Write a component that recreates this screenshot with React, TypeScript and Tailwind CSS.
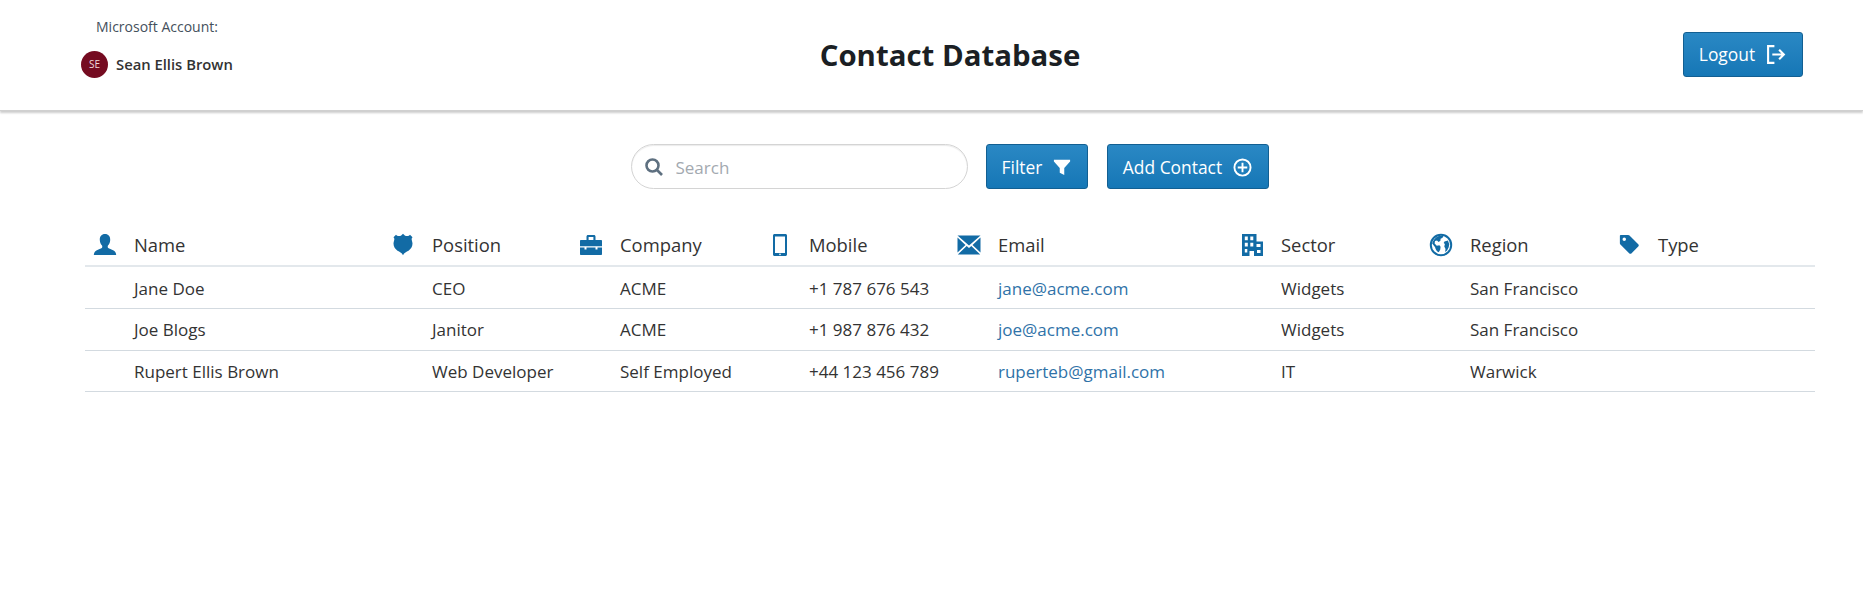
const FONT = "font-['Open_Sans',sans-serif]";

const BLUE = '#126ba5';

const IconUser = () => (
  <svg viewBox="0 0 24 24" className="w-6 h-6" fill={BLUE}>
    <path d="M12 1c3.400 0 5.400 2.500 5.200 6-.1 2.400-1 4.300-2.200 5.400-.4.4-.4 2 .2 2.600.8.800 3.400 1.400 5.400 2.400 1.600.8 2.400 2 2.600 4.600H.8c.2-2.600 1-3.800 2.600-4.600 2-1 4.600-1.600 5.400-2.400.6-.6.6-2.200.2-2.600C7.800 11.300 6.900 9.400 6.800 7 6.600 3.500 8.600 1 12 1z" />
  </svg>
);
const IconShield = () => (
  <svg viewBox="0 0 24 24" className="w-6 h-6" fill={BLUE}>
    <path d="M12 .8l1.800 1.600c1.400.9 3 .9 4.400 0l.8-.7 2.500 2.500-.8 1.200c-.4 1.200.8 3 .8 5.200 0 3-1.700 5.600-4 7.200-2 1.300-4.300 1.800-5.500 4.400-1.200-2.600-3.500-3.100-5.500-4.400-2.300-1.600-4-4.200-4-7.200 0-2.200 1.200-4 .8-5.200l-.8-1.200L5 1.700l.8.7c1.400.9 3 .9 4.400 0z" />
  </svg>
);
const IconBriefcase = () => (
  <svg viewBox="0 0 24 24" className="w-6 h-6" fill={BLUE}>
    <path fillRule="evenodd" d="M7.500 3.500C7.500 2.700 8.200 2 9 2h6c.8 0 1.500.7 1.500 1.500V7H22c.6 0 1 .4 1 1v5.200H1V8c0-.6.4-1 1-1h5.500zM9.600 4v3h4.800V4z" />
    <path d="M1 14.500h4.500v2h2v-2h9v2h2v-2H23V21c0 .6-.4 1-1 1H2c-.6 0-1-.4-1-1z" />
  </svg>
);
const IconMobile = () => (
  <svg viewBox="0 0 24 24" className="w-6 h-6" fill={BLUE}>
    <path fillRule="evenodd" d="M6.500 1h11c.8 0 1.500.7 1.500 1.500v19c0 .8-.7 1.500-1.500 1.500h-11C5.700 23 5 22.300 5 21.500v-19C5 1.700 5.700 1 6.500 1zM7 3.500V20h10V3.500zM12 20.600a.8.8 0 100 1.600.8.8 0 000-1.600z" />
  </svg>
);
const IconEnvelope = () => (
  <svg viewBox="0 0 24 24" className="w-6 h-6" fill={BLUE}>
    <path d="M.5 2.500h23L12 12.500zM.5 4.500v15l8-7.500zM23.500 4.500v15l-8-7.500zM9.700 13.100 12 15.100l2.300-2 8.900 8.400H.8z" />
  </svg>
);
const IconBuilding = () => (
  <svg viewBox="0 0 24 24" className="w-6 h-6" fill={BLUE}>
    <path fillRule="evenodd" d="M2 1h14.500v7.500H23V23h-9v-5H9.500v5H2zM4.800 3.500v3.800h3V3.500zM10.300 3.500v3.800h3V3.500zM4.800 9.800v3.800h3V9.800zM10.300 9.800v3.800h3V9.800zM4.800 16v3.500h2.500V16zM16.500 11v3h4v-3zM17 17v3h3.500v-3z" />
  </svg>
);
const IconGlobe = () => (
  <svg viewBox="0 0 24 24" className="w-6 h-6" fill={BLUE}>
    <path fillRule="evenodd" d="M12 .8a11.200 11.200 0 110 22.400A11.200 11.200 0 0112 .8zM12 2.800a9.200 9.200 0 100 18.400 9.200 9.200 0 000-18.400z" />
    <path d="M9 3.300c1.600-.6 3.800-.7 5.200-.2l-.6 1.700-2 .9-.2 2-1.800 1.200L8 7.600l-2 .5-.4 2.400 2.200 2.200 2.600-.4 1.200 1.500-.4 3-1.500 2.500c-2-.6-3.200-3.300-3.600-5L4 11.500l-.8-1c.8-3 3-6 5.800-7.200zM15.500 8.500l3.400-1 1.400 3.800-.6 3-1.600 3.200-2 1.500.4-3-1.200-2.500.6-2.500-1.200-1z" />
  </svg>
);
const IconTag = () => (
  <svg viewBox="0 0 24 24" className="w-[21px] h-[21px] ml-[2px]" fill={BLUE}>
    <path fillRule="evenodd" d="M2 1h8.500c.6 0 1.100.2 1.500.6l10 10c.8.8.8 2 0 2.800l-7.600 7.600c-.8.800-2 .8-2.800 0l-10-10c-.4-.4-.6-.9-.6-1.500V2c0-.6.4-1 1-1zM6 4a2 2 0 100 4 2 2 0 000-4z" />
  </svg>
);

const columns = [
  { label: 'Name', icon: <IconUser />, width: 'w-[300px] pl-[2px]' },
  { label: 'Position', icon: <IconShield />, width: 'w-[188px]' },
  { label: 'Company', icon: <IconBriefcase />, width: 'w-[189px]' },
  { label: 'Mobile', icon: <IconMobile />, width: 'w-[189px]' },
  { label: 'Email', icon: <IconEnvelope />, width: 'w-[283px]' },
  { label: 'Sector', icon: <IconBuilding />, width: 'w-[189px]' },
  { label: 'Region', icon: <IconGlobe />, width: 'w-[188px]' },
  { label: 'Type', icon: <IconTag />, width: '' },
];

const contacts = [
  { name: 'Jane Doe', position: 'CEO', company: 'ACME', mobile: '+1 787 676 543', email: 'jane@acme.com', sector: 'Widgets', region: 'San Francisco' },
  { name: 'Joe Blogs', position: 'Janitor', company: 'ACME', mobile: '+1 987 876 432', email: 'joe@acme.com', sector: 'Widgets', region: 'San Francisco' },
  { name: 'Rupert Ellis Brown', position: 'Web Developer', company: 'Self Employed', mobile: '+44 123 456 789', email: 'ruperteb@gmail.com', sector: 'IT', region: 'Warwick' },
];

const Button = ({ label, icon, className }: { label: string; icon: React.ReactNode; className: string }) => (
  <button className={`flex items-center justify-center gap-[11px] h-[45px] pt-[1px] rounded-[3px] border border-[#125f92] bg-gradient-to-b from-[#2a88c4] to-[#1577b6] text-white text-[17.4px] ${className}`}>
    {label}
    {icon}
  </button>
);

export default function App() {
  return (
    <div className={`min-h-screen bg-white text-[#333] ${FONT}`}>
      <header className="h-[111px] flex items-center justify-between border-b border-[#d0d0d0] shadow-[0_2px_2px_rgba(0,0,0,0.2)] pl-[81px] pr-[60px]">
        <div className="w-[116px] self-start pt-[16px] whitespace-nowrap">
          <div className="pl-[15px] text-[14px] text-[#44505c] mb-[14px]">Microsoft Account:</div>
          <div className="flex items-center gap-[8px]">
            <div className="w-[27px] h-[27px] shrink-0 rounded-full bg-[#750b21] flex items-center justify-center text-[10px] text-[#f0d8d8]">SE</div>
            <span className="text-[14.8px] font-semibold text-[#333]">Sean Ellis Brown</span>
          </div>
        </div>
        <h1 className="text-[29.4px] font-bold text-[#1b1f24] ml-[20px] mt-[1px]">Contact Database</h1>
        <Button
          label="Logout"
          className="w-[120px] -mt-[2px]"
          icon={
            <svg viewBox="0 0 20 20" className="w-[21px] h-[21px]" fill="none" stroke="white" strokeWidth="2">
              <path d="M8 2H2v16h6" />
              <path d="M6 10h11M12.500 5.500 17 10l-4.500 4.500" />
            </svg>
          }
        />
      </header>

      <div className="flex justify-center items-center mt-[33px] ml-[36px]">
        <div className="w-[337px] h-[45px] rounded-full border border-[#d4d4d4] flex items-center pl-[12px] gap-[12px] shadow-[inset_0_1px_1px_rgba(0,0,0,0.08)]">
          <svg viewBox="0 0 20 20" className="w-[20px] h-[20px]" fill="none" stroke="#5e7080" strokeWidth="2.600">
            <circle cx="8.500" cy="8.500" r="6" />
            <path d="M13 13l5 5" />
          </svg>
          <input placeholder="Search" className="flex-1 min-w-0 pt-[2px] outline-none text-[17px] placeholder:text-[#a3a9b0] bg-transparent" />
        </div>
        <Button
          label="Filter"
          className="w-[102px] ml-[18px]"
          icon={
            <svg viewBox="0 0 20 20" className="w-[18px] h-[18px]" fill="white">
              <path d="M1 2h18v2l-6.500 7v8l-5-2.500V11L1 4z" />
            </svg>
          }
        />
        <Button
          label="Add Contact"
          className="w-[162px] ml-[19px]"
          icon={
            <svg viewBox="0 0 20 20" className="w-[19px] h-[19px]" fill="none" stroke="white" strokeWidth="2">
              <circle cx="10" cy="10" r="8.500" />
              <path d="M10 5v10M5 10h10" />
            </svg>
          }
        />
      </div>

      <div className="ml-[85px] mr-[48px] mt-[34px]">
        <table className="w-full table-fixed border-collapse text-[17px] text-[#333]">
          <thead>
            <tr className="h-[43px] border-b-2 border-[#e3e8ec]">
              {columns.map((c) => (
                <th key={c.label} className={`${c.width} font-normal text-left p-0 text-[18.4px]`}>
                  <div className="flex items-center pt-[2px]">
                    <span className="w-[47px] pl-[6px] shrink-0">{c.icon}</span>
                    {c.label}
                  </div>
                </th>
              ))}
            </tr>
          </thead>
          <tbody>
            {contacts.map((c, i) => (
              <tr key={c.email} className={`border-b border-[#d3dae0] ${i === 2 ? 'h-[41px]' : 'h-[42px]'}`}>
                <td className="p-0 pl-[49px] pt-[2px]">{c.name}</td>
                <td className="p-0 pl-[47px] pt-[2px]">{c.position}</td>
                <td className="p-0 pl-[47px] pt-[2px]">{c.company}</td>
                <td className="p-0 pl-[47px] pt-[2px]">{c.mobile}</td>
                <td className="p-0 pl-[47px] pt-[2px]">
                  <a href="#" className="text-[#2f72a8]">{c.email}</a>
                </td>
                <td className="p-0 pl-[47px] pt-[2px]">{c.sector}</td>
                <td className="p-0 pl-[47px] pt-[2px]">{c.region}</td>
                <td className="p-0" />
              </tr>
            ))}
          </tbody>
        </table>
      </div>
    </div>
  );
}
